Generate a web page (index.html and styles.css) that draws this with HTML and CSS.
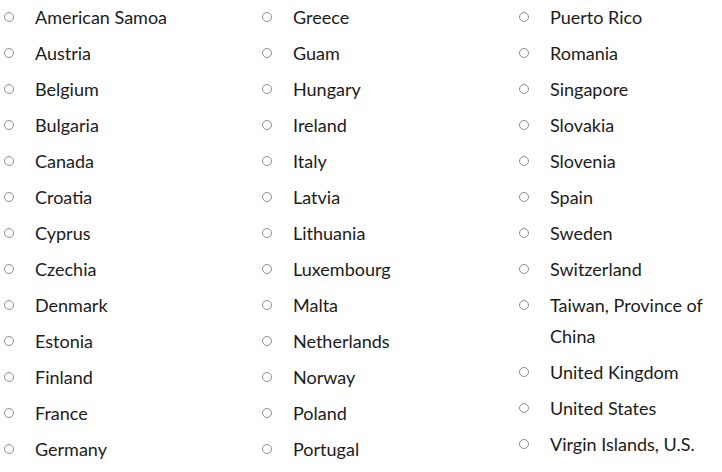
FILE: index.html
```html
<!DOCTYPE html>
<html lang="en">
<head>
<meta charset="utf-8">
<title>Countries</title>
<link rel="stylesheet" href="styles.css">
</head>
<body>
<div class="countries">
  <ul class="col">
    <li class="item"><span class="radio"></span><span class="label">American Samoa</span></li>
    <li class="item"><span class="radio"></span><span class="label">Austria</span></li>
    <li class="item"><span class="radio"></span><span class="label">Belgium</span></li>
    <li class="item"><span class="radio"></span><span class="label">Bulgaria</span></li>
    <li class="item"><span class="radio"></span><span class="label">Canada</span></li>
    <li class="item"><span class="radio"></span><span class="label">Croatia</span></li>
    <li class="item"><span class="radio"></span><span class="label">Cyprus</span></li>
    <li class="item"><span class="radio"></span><span class="label">Czechia</span></li>
    <li class="item"><span class="radio"></span><span class="label">Denmark</span></li>
    <li class="item"><span class="radio"></span><span class="label">Estonia</span></li>
    <li class="item"><span class="radio"></span><span class="label">Finland</span></li>
    <li class="item"><span class="radio"></span><span class="label">France</span></li>
    <li class="item"><span class="radio"></span><span class="label">Germany</span></li>
  </ul>
  <ul class="col">
    <li class="item"><span class="radio"></span><span class="label">Greece</span></li>
    <li class="item"><span class="radio"></span><span class="label">Guam</span></li>
    <li class="item"><span class="radio"></span><span class="label">Hungary</span></li>
    <li class="item"><span class="radio"></span><span class="label">Ireland</span></li>
    <li class="item"><span class="radio"></span><span class="label">Italy</span></li>
    <li class="item"><span class="radio"></span><span class="label">Latvia</span></li>
    <li class="item"><span class="radio"></span><span class="label">Lithuania</span></li>
    <li class="item"><span class="radio"></span><span class="label">Luxembourg</span></li>
    <li class="item"><span class="radio"></span><span class="label">Malta</span></li>
    <li class="item"><span class="radio"></span><span class="label">Netherlands</span></li>
    <li class="item"><span class="radio"></span><span class="label">Norway</span></li>
    <li class="item"><span class="radio"></span><span class="label">Poland</span></li>
    <li class="item"><span class="radio"></span><span class="label">Portugal</span></li>
  </ul>
  <ul class="col">
    <li class="item"><span class="radio"></span><span class="label">Puerto Rico</span></li>
    <li class="item"><span class="radio"></span><span class="label">Romania</span></li>
    <li class="item"><span class="radio"></span><span class="label">Singapore</span></li>
    <li class="item"><span class="radio"></span><span class="label">Slovakia</span></li>
    <li class="item"><span class="radio"></span><span class="label">Slovenia</span></li>
    <li class="item"><span class="radio"></span><span class="label">Spain</span></li>
    <li class="item"><span class="radio"></span><span class="label">Sweden</span></li>
    <li class="item"><span class="radio"></span><span class="label">Switzerland</span></li>
    <li class="item"><span class="radio"></span><span class="label">Taiwan, Province of China</span></li>
    <li class="item"><span class="radio"></span><span class="label">United Kingdom</span></li>
    <li class="item"><span class="radio"></span><span class="label">United States</span></li>
    <li class="item"><span class="radio"></span><span class="label">Virgin Islands, U.S.</span></li>
  </ul>
</div>
</body>
</html>
```
FILE: styles.css
```css
html, body {
  margin: 0;
  padding: 0;
  background: #ffffff;
}
body {
  font-family: "Lato", "Liberation Sans", sans-serif;
  font-size: 18px;
  color: #1b1b1b;
}
.countries {
  display: grid;
  grid-template-columns: 258px 257px 207px;
  padding-top: 2px;
}
.col {
  list-style: none;
  margin: 0;
  padding: 0;
}
.item {
  display: flex;
  align-items: flex-start;
  line-height: 31px;
  margin-bottom: 5px;
}
.radio {
  flex: none;
  box-sizing: border-box;
  width: 10px;
  height: 10px;
  margin: 10px 0 0 4px;
  border: 1px solid #8d8d8d;
  border-radius: 50%;
  background: #fff;
}
.label {
  margin-left: 21px;
  min-width: 0;
  padding-right: 8px;
}
```
